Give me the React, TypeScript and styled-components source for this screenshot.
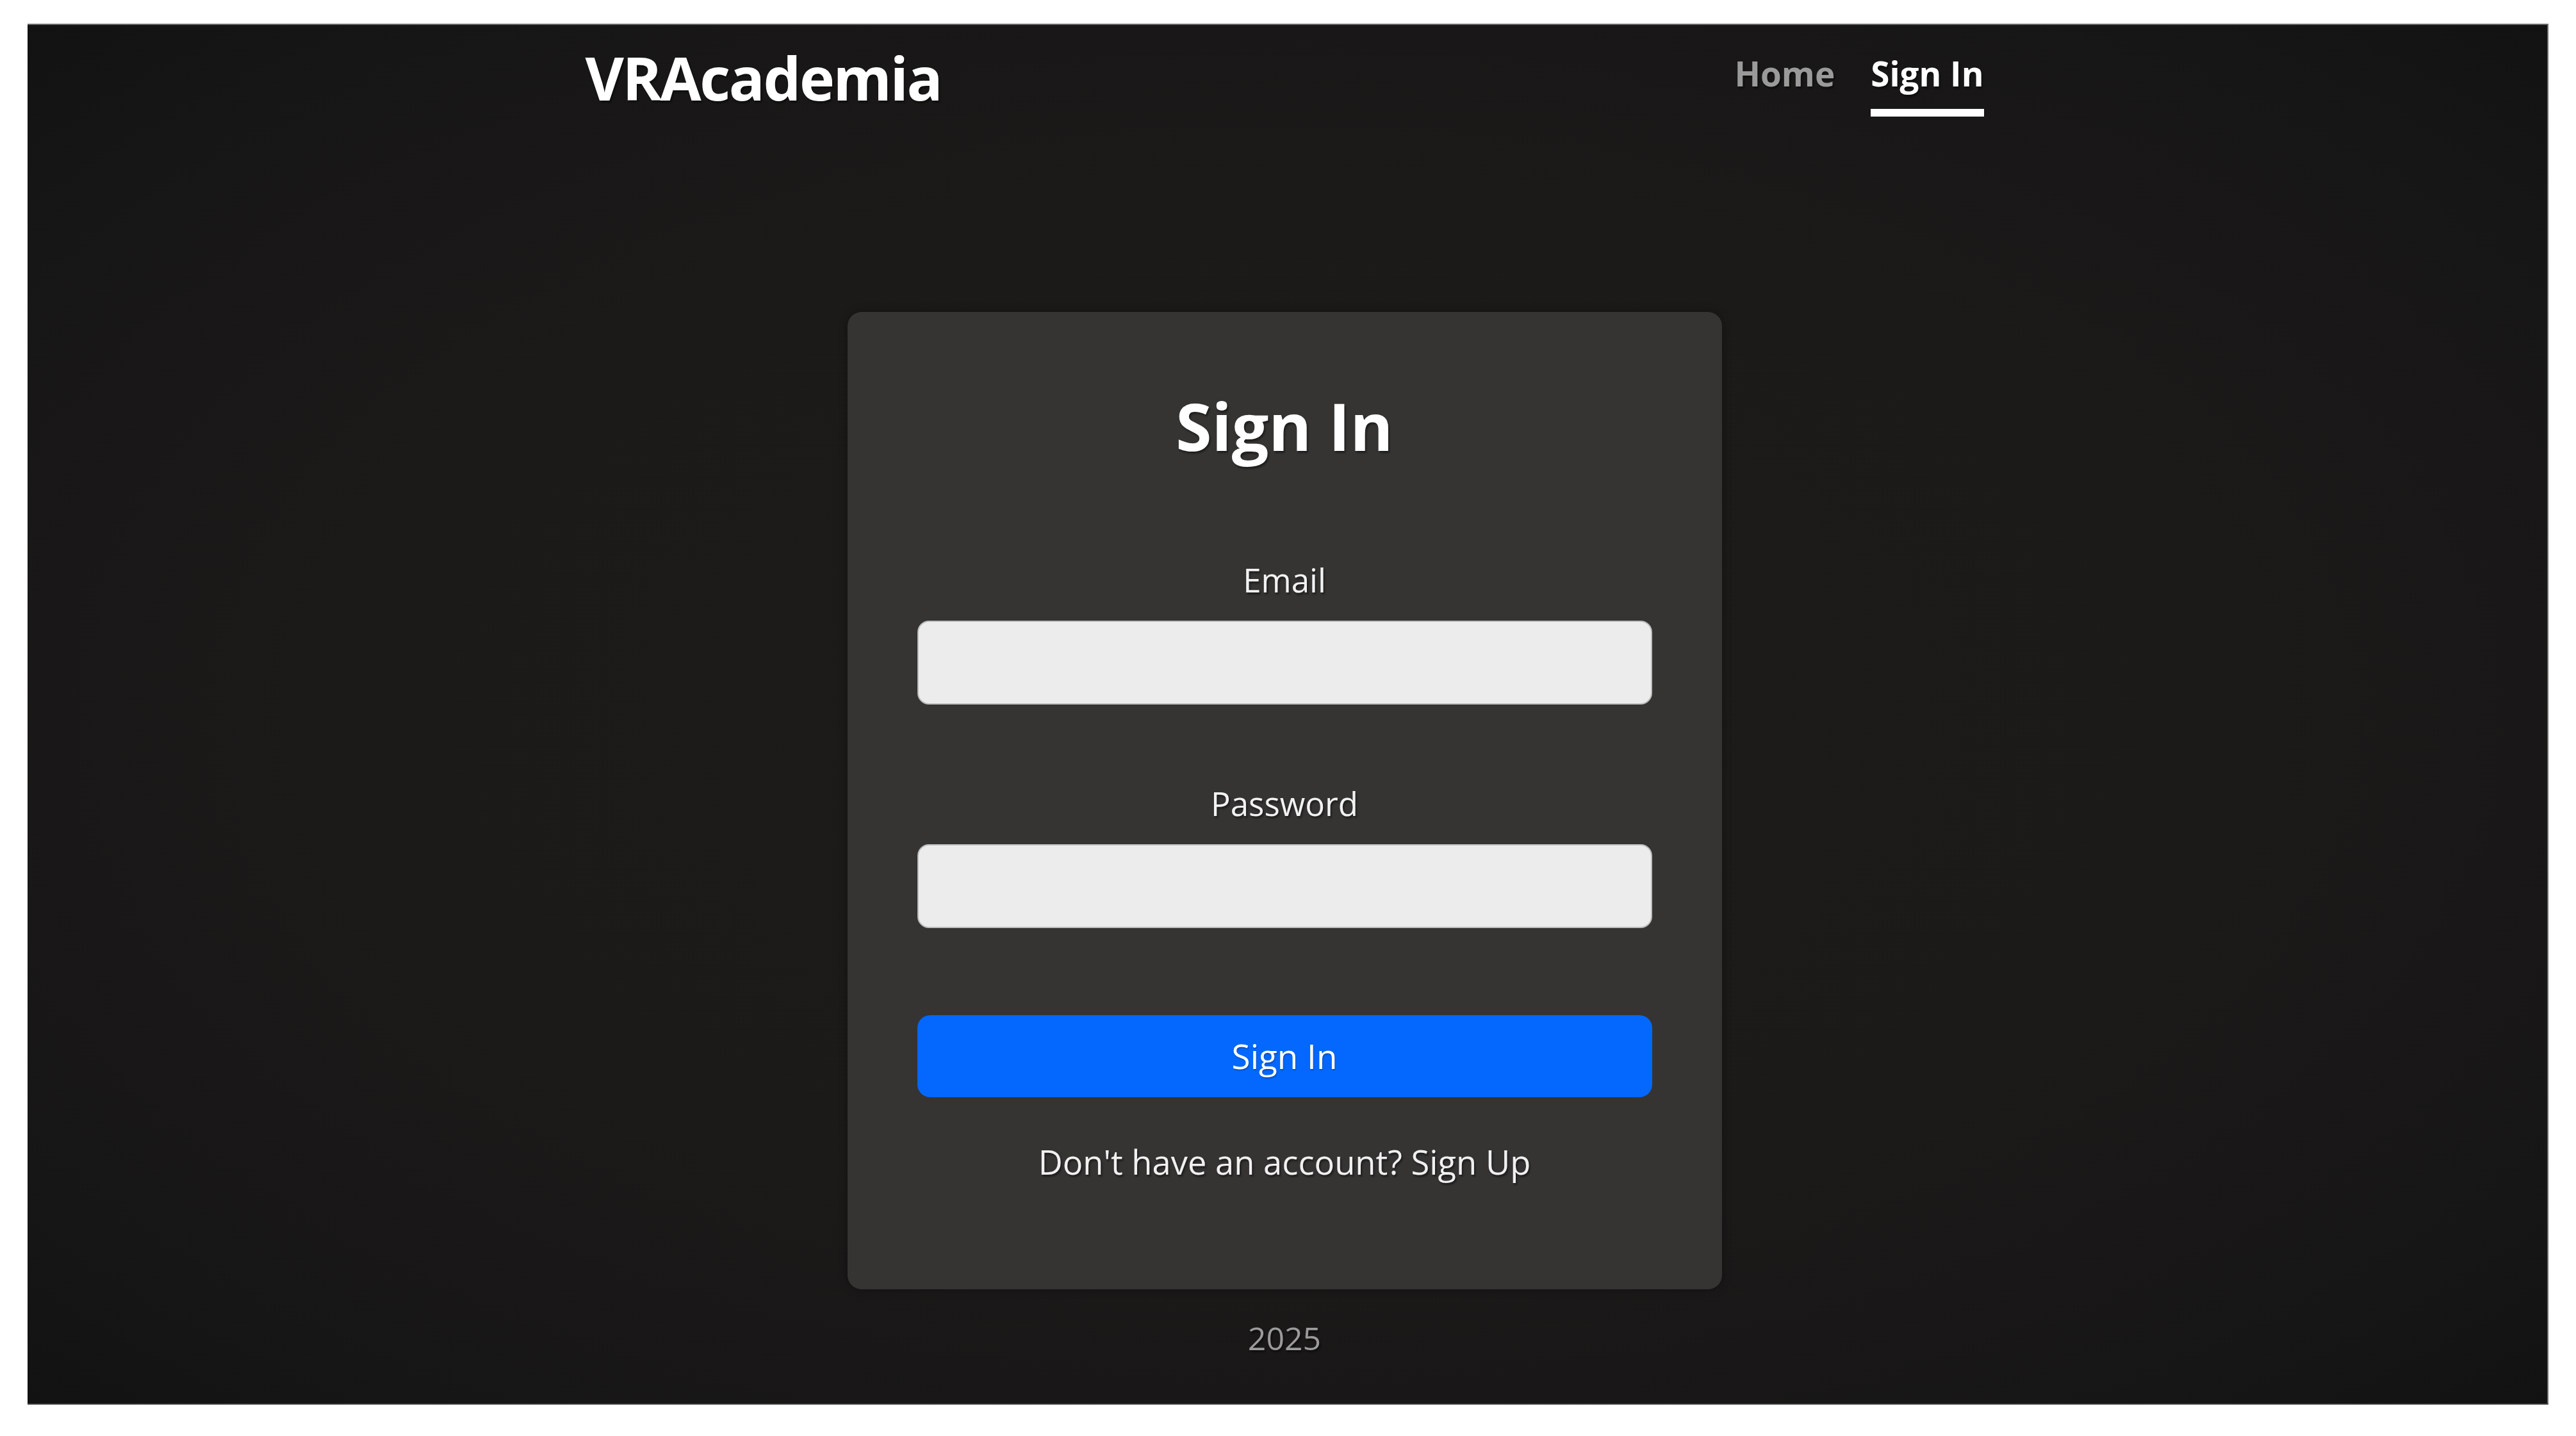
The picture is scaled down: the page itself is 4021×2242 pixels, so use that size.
import React from "react";
import styled, { createGlobalStyle } from "styled-components";

const GlobalStyle = createGlobalStyle`
  html, body {
    margin: 0;
    padding: 0;
    background: #ffffff;
  }
  body {
    padding: 37px 43px 49px 43px;
    font-family: "Open Sans", "Noto Sans", "Liberation Sans", sans-serif;
  }
  * { box-sizing: border-box; }
`;

const Frame = styled.div`
  width: 3935px;
  height: 2156px;
  border-top: 2px solid #6b6b6b;
  border-right: 2px solid #6b6b6b;
  border-bottom: 2px solid #3a3a3a;
  padding-right: 9px;
  background: radial-gradient(
    ellipse at 50% 50%,
    #1c1b1a 0%,
    #1b1a19 55%,
    #171616 85%,
    #121212 100%
  );
  display: flex;
  flex-direction: column;
  align-items: center;
  text-shadow: 2px 3px 3px rgba(0, 0, 0, 0.45);
`;

const Header = styled.header`
  width: 2183px;
  padding-top: 27px;
  display: flex;
  justify-content: space-between;
  align-items: flex-start;
`;

const Logo = styled.div`
  font-size: 93px;
  line-height: 110px;
  font-weight: 700;
  letter-spacing: -2.4px;
  color: #ffffff;
`;

const Nav = styled.nav`
  display: flex;
  gap: 56px;
  padding-top: 18px;
`;

const NavLink = styled.a<{ $active?: boolean }>`
  font-size: 53px;
  line-height: 62px;
  font-weight: 700;
  text-decoration: none;
  color: ${(p) => (p.$active ? "#ffffff" : "#9a9a9a")};
  padding-bottom: 24px;
  border-bottom: 12px solid ${(p) => (p.$active ? "#ffffff" : "transparent")};
`;

const Card = styled.form`
  margin-top: 305px;
  width: 1365px;
  height: 1526px;
  padding: 118px 109px 0 109px;
  background: #353433;
  border-radius: 22px;
  box-shadow: 0 0 14px rgba(0, 0, 0, 0.35);
  display: flex;
  flex-direction: column;
  align-items: stretch;
`;

const Title = styled.h2`
  margin: 0 0 150px 0;
  font-size: 102px;
  line-height: 120px;
  font-weight: 700;
  color: #ffffff;
  text-align: center;
`;

const Field = styled.div<{ $gap: number }>`
  display: flex;
  flex-direction: column;
  margin-bottom: ${(p) => p.$gap}px;
`;

const Label = styled.label`
  font-size: 51px;
  line-height: 61px;
  color: #f2f2f2;
  text-align: center;
  margin-bottom: 33px;
`;

const Input = styled.input`
  height: 131px;
  width: 100%;
  background: #ececec;
  border: 2px solid #bdbdbd;
  border-radius: 18px;
  outline: none;
  font-size: 50px;
  padding: 0 30px;
  font-family: inherit;
`;

const Button = styled.button`
  height: 128px;
  width: 100%;
  background: #0468fe;
  border: none;
  border-radius: 20px;
  color: #ffffff;
  font-family: inherit;
  font-size: 53px;
  line-height: 128px;
  padding: 0;
  text-shadow: 1px 2px 2px rgba(0, 0, 0, 0.25);
  cursor: pointer;
`;

const Switch = styled.p`
  margin: 69px 0 0 0;
  font-size: 52.5px;
  line-height: 63px;
  color: #f0f0f0;
  text-align: center;
`;

const SwitchLink = styled.a`
  color: inherit;
  text-decoration: none;
`;

const Footer = styled.footer`
  margin-top: 46px;
  font-size: 50px;
  line-height: 60px;
  color: #9b9b9b;
  text-align: center;
`;

export default function App() {
  return (
    <>
      <GlobalStyle />
      <Frame>
        <Header>
          <Logo>VRAcademia</Logo>
          <Nav>
            <NavLink href="#">Home</NavLink>
            <NavLink href="#" $active>
              Sign In
            </NavLink>
          </Nav>
        </Header>
        <Card onSubmit={(e) => e.preventDefault()}>
          <Title>Sign In</Title>
          <Field $gap={124}>
            <Label htmlFor="email">Email</Label>
            <Input id="email" type="email" />
          </Field>
          <Field $gap={136}>
            <Label htmlFor="password">Password</Label>
            <Input id="password" type="password" />
          </Field>
          <Button type="submit">Sign In</Button>
          <Switch>
            Don't have an account? <SwitchLink href="#">Sign Up</SwitchLink>
          </Switch>
        </Card>
        <Footer>2025</Footer>
      </Frame>
    </>
  );
}
